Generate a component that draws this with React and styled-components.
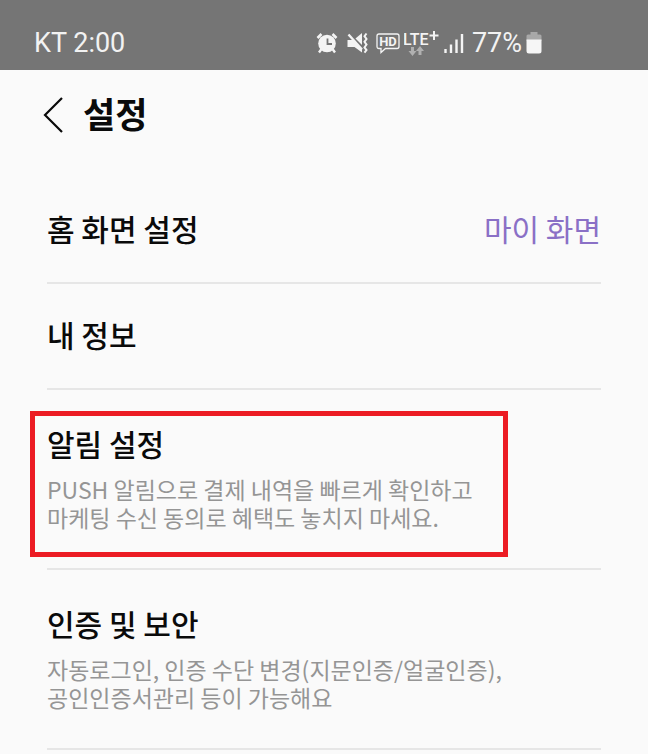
import React from 'react';
import styled, { createGlobalStyle } from 'styled-components';

const GlobalStyle = createGlobalStyle`
  * {
    box-sizing: border-box;
  }

  body {
    margin: 0;
    background: #fafafa;
    color: #0a0a0a;
    font-family: 'Noto Sans CJK KR', 'Noto Sans', sans-serif;
  }
`;

// Phone status bar
const StatusBar = styled.div`
  display: flex;
  justify-content: space-between;
  align-items: center;
  height: 70px;
  padding: 16px 106px 0 34px;
  background: #757575;
  color: #f2f2f2;
  font-family: Roboto, sans-serif;
  font-size: 27px;
  line-height: 32px;
`;

const StatusIcons = styled.div`
  display: flex;
  align-items: center;
  gap: 8px;
`;

const StatusGroup = styled.div`
  display: flex;
  align-items: center;
  gap: 4px;
`;

// Page header
const Header = styled.header`
  display: flex;
  align-items: center;
  gap: 20px;
  padding: 22px 43px 40px;
`;

const BackButton = styled.button`
  display: flex;
  padding: 0;
  border: 0;
  background: none;
  color: inherit;
  cursor: pointer;
`;

const PageTitle = styled.h1`
  margin: 0;
  padding-bottom: 4px;
  font-size: 35px;
  font-weight: 700;
  line-height: 42px;
`;

// Settings list
const List = styled.ul`
  margin: 0;
  padding: 0 47px;
  list-style: none;
`;

const Item = styled.li`
  position: relative;
  border-bottom: 2px solid #e6e6e6;
`;

const ItemLink = styled.a`
  display: block;
  padding: ${({ $tall }) => ($tall ? '33px 0 37px' : '30px 0 34px')};
  color: inherit;
  text-decoration: none;
`;

const ItemHead = styled.div`
  display: flex;
  justify-content: space-between;
  font-size: 30px;
  line-height: 40px;
`;

const ItemTitle = styled.span`
  font-weight: 500;
`;

const ItemValue = styled.span`
  color: #8a70c6;
`;

const ItemDescription = styled.p`
  margin: 12px 0 0;
  color: #959595;
  font-size: 23px;
  line-height: 28px;
  white-space: pre-line;
`;

const Highlight = styled.div`
  position: absolute;
  top: 21px;
  bottom: 11px;
  left: -17px;
  width: 478px;
  border: 5px solid #ec1c24;
  pointer-events: none;
`;

const items = [
  { title: '홈 화면 설정', value: '마이 화면' },
  { title: '내 정보' },
  {
    title: '알림 설정',
    description: 'PUSH 알림으로 결제 내역을 빠르게 확인하고\n마케팅 수신 동의로 혜택도 놓치지 마세요.',
    highlighted: true,
  },
  {
    title: '인증 및 보안',
    description: '자동로그인, 인증 수단 변경(지문인증/얼굴인증),\n공인인증서관리 등이 가능해요',
  },
];

const AlarmIcon = () => (
  <svg width="22" height="22" viewBox="0 0 22 22" aria-hidden="true">
    <circle cx="11" cy="11.5" r="8.8" fill="#f4f4f4" />
    <path d="M1.5 6 5.500 2M20.5 6 16.500 2" stroke="#f4f4f4" strokeWidth="2.6" />
    <path d="m5.5 17-2.5 3.5M16.5 17l2.5 3.5" stroke="#f4f4f4" strokeWidth="2.4" />
    <path d="M11.5 6.5v5.5h4.5" fill="none" stroke="#757575" strokeWidth="1.8" />
  </svg>
);

const MuteIcon = () => (
  <svg width="22" height="22" viewBox="0 0 22 22" aria-hidden="true">
    <path d="M1.500 8H7l9 9v3.500L8.500 15h-7z" fill="#f4f4f4" />
    <path d="M16 1v12L9.500 6.500z" fill="#f4f4f4" />
    <path d="m2.500 2.500 13.500 15" stroke="#f4f4f4" strokeWidth="2.4" />
    <path
      d="m20.500 1.500-2 2.700 2 2.800-2 2.800 2 2.800-2 2.800 2 2.700-2 2.500"
      fill="none"
      stroke="#f4f4f4"
      strokeWidth="2"
    />
  </svg>
);

const HdIcon = () => (
  <svg width="24" height="22" viewBox="0 0 24 22" aria-hidden="true">
    <path
      d="M3 2h18q2 0 2 2v10.500q0 2-2 2H9.500L5 20.500v-4H3q-2 0-2-2V4q0-2 2-2Z"
      fill="none"
      stroke="#f4f4f4"
      strokeWidth="1.3"
    />
    <text x="12" y="14" textAnchor="middle" fill="#f4f4f4" fontFamily="Roboto" fontWeight="700" fontSize="13">
      HD
    </text>
  </svg>
);

const LteIcon = () => (
  <svg width="36" height="26" viewBox="0 0 36 26" aria-hidden="true">
    <text x="-1" y="15" fill="#f4f4f4" fontFamily="Roboto" fontWeight="500" fontSize="16">
      LTE
    </text>
    <path d="M30 1v9M25.500 5.500h9" stroke="#f4f4f4" strokeWidth="2" />
    <path d="M7 17h3v4h2.500l-4 5-4-5H7zM14.500 25h3v-4H20l-4-5-4 5h2.500z" fill="#b0b0b0" />
  </svg>
);

const SignalIcon = () => (
  <svg width="20" height="22" viewBox="0 0 20 22" aria-hidden="true">
    <path d="M1.500 17v4M7 12.500v8.500M12.500 7.500v13.500M18 2v19" stroke="#f4f4f4" strokeWidth="2.400" />
  </svg>
);

const BatteryIcon = () => (
  <svg width="16" height="24" viewBox="0 0 16 24" aria-hidden="true">
    <path d="M4.500 1h7v2.500H14q1.500 0 1.500 1.500v5H.5V5Q.5 3.500 2 3.500h2.500z" fill="#a8a8a8" />
    <path d="M.5 8.500h15V20q0 2.500-2.500 2.500H3Q.5 22.500.5 20z" fill="#f6f6f6" />
  </svg>
);

const App = () => (
  <>
    <GlobalStyle />
    <StatusBar>
      <span>KT 2:00</span>
      <StatusIcons>
        <AlarmIcon />
        <MuteIcon />
        <StatusGroup>
          <HdIcon />
          <LteIcon />
          <SignalIcon />
        </StatusGroup>
        <StatusGroup>
          <span>77%</span>
          <BatteryIcon />
        </StatusGroup>
      </StatusIcons>
    </StatusBar>
    <Header>
      <BackButton type="button" aria-label="뒤로">
        <svg width="20" height="36" viewBox="0 0 20 36" fill="none" stroke="currentColor" strokeWidth="2.2">
          <path d="M19 1 2 18l17 17" />
        </svg>
      </BackButton>
      <PageTitle>설정</PageTitle>
    </Header>
    <main>
      <List>
        {items.map((item) => (
          <Item key={item.title}>
            <ItemLink href="#" $tall={Boolean(item.description)}>
              <ItemHead>
                <ItemTitle>{item.title}</ItemTitle>
                {item.value && <ItemValue>{item.value}</ItemValue>}
              </ItemHead>
              {item.description && <ItemDescription>{item.description}</ItemDescription>}
            </ItemLink>
            {item.highlighted && <Highlight />}
          </Item>
        ))}
      </List>
    </main>
  </>
);

export default App;
